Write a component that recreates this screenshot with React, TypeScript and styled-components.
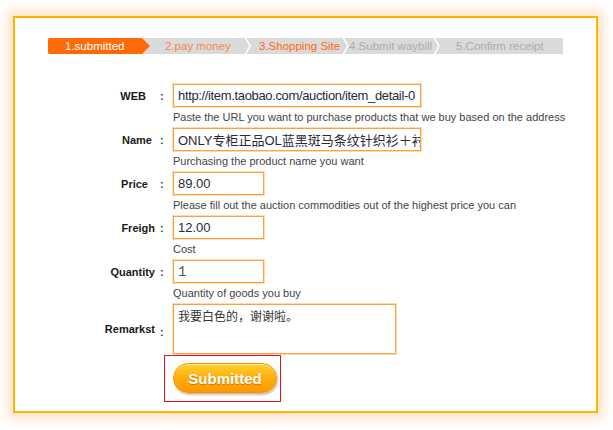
import React from "react";
import styled, { createGlobalStyle } from "styled-components";

const Global = createGlobalStyle`
  html, body { margin: 0; padding: 0; background: #ffffff; }
  body { font-family: "Liberation Sans", Arial, sans-serif; }
  * { box-sizing: border-box; }
`;

const Page = styled.div`
  width: 613px;
  height: 430px;
  padding: 16px 0 0 13px;
  background: #ffffff;
`;

const Card = styled.div`
  width: 585px;
  height: 397px;
  border: 2px solid #ffb400;
  background: #ffffff;
  box-shadow: 0 0 9px 6px rgba(255, 170, 90, 0.3);
  padding: 20px 0 0 0;
  display: flex;
  flex-direction: column;
`;

const StepBar = styled.div`
  margin-left: 33px;
  width: 515px;
  height: 16px;
  display: flex;
  align-items: stretch;
  background: #dadada;
  font-size: 11.5px;
  line-height: 16px;
  white-space: nowrap;
`;

const FirstStep = styled.div`
  width: 102px;
  flex: none;
  background: #ff6a08;
  color: #ffffff;
  padding-left: 17px;
  clip-path: polygon(0 0, 94px 0, 102px 8px, 94px 16px, 0 16px);
  border-radius: 2px 0 0 2px;
`;

const Step = styled.div<{ $w: number; $pad: number; $color: string }>`
  width: ${(p) => p.$w}px;
  flex: none;
  padding-left: ${(p) => p.$pad}px;
  color: ${(p) => p.$color};
`;

const Chevron = () => (
  <svg width="6" height="16" viewBox="0 0 6 16" style={{ display: "block", flex: "none" }}>
    <polyline points="0.5,0 5,8 0.5,16" fill="none" stroke="#ffffff" strokeWidth="1.5" />
  </svg>
);

const Form = styled.div`
  margin-top: 30px;
  display: flex;
  flex-direction: column;
`;

const Row = styled.div`
  display: flex;
  align-items: center;
`;

const Label = styled.div<{ $trail: number }>`
  width: 141px;
  text-align: right;
  padding-right: ${(p) => p.$trail}px;
  font-size: 11px;
  font-weight: bold;
  color: #1a1a1a;
`;

const Colon = styled.div<{ $drop?: number }>`
  width: 17px;
  padding-left: 4px;
  font-size: 11px;
  font-weight: bold;
  color: #333;
  position: relative;
  top: ${(p) => p.$drop ?? 0}px;
`;

const Field = styled.input<{ $w: number; $mono?: boolean; $tight?: boolean }>`
  width: ${(p) => p.$w}px;
  height: 23px;
  border: 1px solid #ff9f45;
  box-shadow: 0 0 0 1px #ffd9b0;
  padding: 0 0 0 4px;
  margin: 0;
  outline: none;
  background: #ffffff;
  color: ${(p) => (p.$mono ? "#555" : "#2a2a38")};
  font-size: ${(p) => (p.$mono ? "14px" : "13px")};
  letter-spacing: ${(p) => (p.$tight ? "-0.35px" : "0")};
  font-family: ${(p) =>
    p.$mono
      ? '"Liberation Mono", "Noto Sans CJK SC", monospace'
      : '"Liberation Sans", Arial, "Noto Sans CJK SC", sans-serif'};
`;

const Area = styled.textarea`
  width: 223px;
  height: 50px;
  border: 1px solid #ff9f45;
  box-shadow: 0 0 0 1px #ffd9b0;
  padding: 3px 4px;
  margin: 0;
  outline: none;
  resize: none;
  color: #333;
  font-size: 12px;
  line-height: 15px;
  font-family: "Noto Sans CJK SC", sans-serif;
  display: block;
`;

const Hint = styled.div`
  margin-left: 158px;
  height: 21px;
  line-height: 21px;
  font-size: 11px;
  color: #444;
  white-space: nowrap;
`;

const ButtonBox = styled.div`
  margin: 1px 0 0 149px;
  width: 117px;
  height: 47px;
  border: 1px solid #e8101a;
  padding: 7px 0 0 8px;
`;

const SubmitButton = styled.button`
  width: 104px;
  height: 30px;
  border-radius: 15px;
  border: 1px solid #f29200;
  background: linear-gradient(to bottom, #ffd230 0%, #ffb00c 45%, #ff9800 100%);
  box-shadow: 1px 2px 2px rgba(150, 110, 60, 0.45), inset 0 1px 0 rgba(255, 240, 170, 0.8);
  color: #ffffff;
  font-family: "Liberation Sans", Arial, sans-serif;
  font-weight: bold;
  font-size: 15px;
  text-shadow: 0 1px 1px rgba(190, 90, 0, 0.7);
  padding: 0;
  cursor: pointer;
`;

export default function App() {
  return (
    <Page>
      <Global />
      <Card>
        <StepBar>
          <FirstStep>1.submitted</FirstStep>
          <Step $w={15} $pad={0} $color="#f48a4a" />
          <Step $w={80} $pad={0} $color="#f48a4a">2.pay money</Step>
          <Chevron />
          <Step $w={92} $pad={8} $color="#ff6a10">3.Shopping Site</Step>
          <Chevron />
          <Step $w={85} $pad={0} $color="#acacac">4.Submit waybill</Step>
          <Chevron />
          <Step $w={124} $pad={16} $color="#acacac">5.Confirm receipt</Step>
        </StepBar>

        <Form>
          <Row>
            <Label $trail={10}>WEB</Label>
            <Colon>:</Colon>
            <Field $w={248} $tight defaultValue="http://item.taobao.com/auction/item_detail-0" readOnly />
          </Row>
          <Hint>Paste the URL you want to purchase products that we buy based on the address</Hint>

          <Row>
            <Label $trail={4}>Name</Label>
            <Colon>:</Colon>
            <Field $w={248} defaultValue="ONLY专柜正品OL蓝黑斑马条纹针织衫＋衬衫两件套" readOnly />
          </Row>
          <Hint>Purchasing the product name you want</Hint>

          <Row>
            <Label $trail={8}>Price</Label>
            <Colon>:</Colon>
            <Field $w={91} defaultValue="89.00" readOnly />
          </Row>
          <Hint>Please fill out the auction commodities out of the highest price you can</Hint>

          <Row>
            <Label $trail={1}>Freigh</Label>
            <Colon>:</Colon>
            <Field $w={91} defaultValue="12.00" readOnly />
          </Row>
          <Hint>Cost</Hint>

          <Row>
            <Label $trail={1}>Quantity</Label>
            <Colon>:</Colon>
            <Field $w={91} $mono defaultValue="1" readOnly />
          </Row>
          <Hint>Quantity of goods you buy</Hint>

          <Row>
            <Label $trail={1}>Remarkst</Label>
            <Colon $drop={3}>:</Colon>
            <Area defaultValue="我要白色的，谢谢啦。" readOnly />
          </Row>

          <ButtonBox>
            <SubmitButton type="button">Submitted</SubmitButton>
          </ButtonBox>
        </Form>
      </Card>
    </Page>
  );
}
